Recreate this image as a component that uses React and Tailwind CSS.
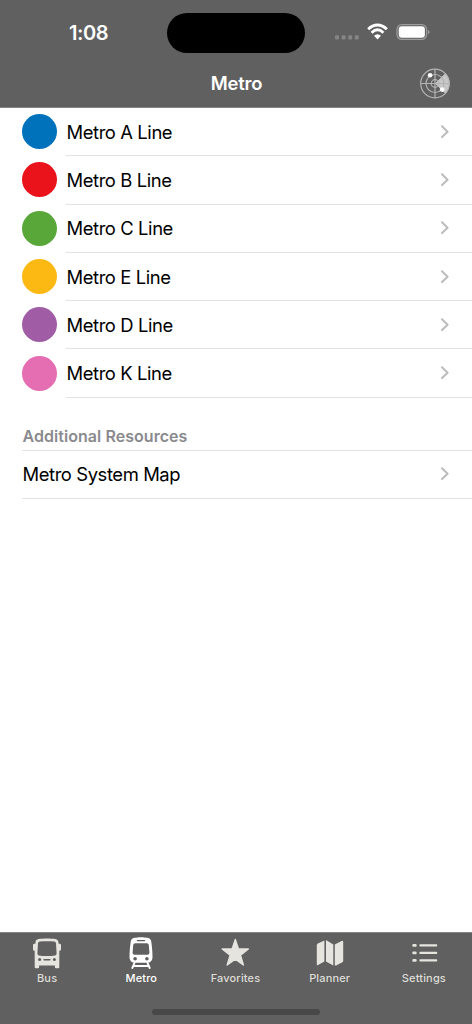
import React from 'react';

const metroLines = [
  { name: 'Metro A Line', color: 'bg-[#0072bc]' },
  { name: 'Metro B Line', color: 'bg-[#eb131b]' },
  { name: 'Metro C Line', color: 'bg-[#58a738]' },
  { name: 'Metro E Line', color: 'bg-[#fdb913]' },
  { name: 'Metro D Line', color: 'bg-[#a05da5]' },
  { name: 'Metro K Line', color: 'bg-[#e56db1]' },
];

const Chevron = () => (
  <svg className="h-4 w-2.5 shrink-0" viewBox="0 0 10 16" fill="none" stroke="#bdbdbf" strokeWidth="2.1" strokeLinecap="round" strokeLinejoin="round">
    <path d="M2 2.3 7.6 7.7 2 13.1" />
  </svg>
);

const RadarIcon = () => (
  <svg className="h-8 w-8" viewBox="0 0 32 32" fill="none">
    <path d="M16 15.5 26.4 5.3A14.6 14.6 0 0 1 26.4 25.7Z" fill="#c8c8c8" />
    <g stroke="#b4b4b4" strokeWidth="1.2">
      <circle cx="16" cy="15.5" r="14.3" />
      <circle cx="16" cy="15.5" r="9" />
      <circle cx="16" cy="15.5" r="3.8" />
      <path d="M16 1.2V29.8M1.7 15.5H30.3" />
    </g>
    <circle cx="11.1" cy="7.3" r="2.3" fill="#fff" />
    <circle cx="23.2" cy="21.6" r="2.3" fill="#fff" />
  </svg>
);

const BusIcon = () => (
  <svg className="h-8 w-8" viewBox="0 0 32 32">
    <path
      fill="#e5e4de"
      fillRule="evenodd"
      d="M7.6 2.1C12 1.4 20 1.4 24.4 2.1Q27.3 2.6 27.5 5.2L27.6 6.8H28.6Q30 6.8 30 8.2V12.4Q30 13.8 28.3 13.8V30.2Q28.3 31.3 27.2 31.3H25Q23.9 31.3 23.9 30.2V28.4H8.1V30.2Q8.1 31.3 7 31.3H4.8Q3.7 31.3 3.7 30.2V13.8Q2 13.8 2 12.4V8.2Q2 6.8 3.4 6.8H4.4L4.5 5.2Q4.7 2.6 7.6 2.1ZM8.8 4.5Q7.1 4.7 7 6.2L6.4 16.6Q6.4 18.1 7.8 18.4C12.5 19.1 19.5 19.1 24.2 18.4Q25.6 18.1 25.6 16.6L25 6.2Q24.9 4.7 23.2 4.5C19 4.1 13 4.1 8.8 4.5Z"
    />
    <g fill="#606060">
      <circle cx="8.6" cy="22.6" r="1.5" />
      <circle cx="23.4" cy="22.6" r="1.5" />
      <rect x="12.4" y="21.9" width="7.2" height="1.5" rx=".7" />
    </g>
  </svg>
);

const TrainIcon = () => (
  <svg className="h-8 w-8" viewBox="0 0 32 32">
    <path
      fill="#fff"
      fillRule="evenodd"
      d="M9.4.8C13-.1 19-.1 22.6.8 25 1.4 26 2.6 26.3 4.8 27 10 27.5 15.3 27.5 20 27.5 23.8 25.2 25.8 21.8 25.8H10.2C6.8 25.8 4.5 23.8 4.5 20 4.5 15.3 5 10 5.7 4.8 6 2.6 7 1.4 9.4.8ZM12.4 2.9Q11.7 2.9 11.7 3.6T12.4 4.3H19.6Q20.3 4.3 20.3 3.6T19.6 2.9ZM10.2 6.2Q8.4 6.2 8.2 8L7.6 15.6Q7.5 17.8 9.5 17.8H22.5Q24.5 17.8 24.4 15.6L23.8 8Q23.6 6.2 21.8 6.2Z"
    />
    <circle cx="10.1" cy="21.7" r="1.8" fill="#606060" />
    <circle cx="21.9" cy="21.7" r="1.8" fill="#606060" />
    <path d="M9.4 26.2 7.3 31M22.6 26.2 24.7 31M9 29H23" fill="none" stroke="#fff" strokeWidth="1.9" strokeLinecap="round" />
  </svg>
);

const StarIcon = () => (
  <svg className="h-8 w-8" viewBox="0 0 32 32" fill="#e5e4de" stroke="#e5e4de" strokeWidth="1.4" strokeLinejoin="round">
    <path d="M16.3 2.5 19.5 12H29.4L21.5 18.1 24.4 28 16.3 22.1 8.2 28 11.1 18.1 3.2 12H13.1Z" />
  </svg>
);

const MapIcon = () => (
  <svg className="h-8 w-8" viewBox="0 0 32 32" fill="#e5e4de">
    <path d="M2.8 8.2Q2.8 7 3.8 6.4L10.4 3.4V24.5L4.1 28Q2.8 28.6 2.8 27.3Z" />
    <path d="M12 3.3 12.8 3.6 19.3 7.6V28.4L12 24.5Z" />
    <path d="M20.8 7.6 27.6 3.9Q29.2 3.3 29.2 4.8V23.7Q29.2 24.7 28.3 25.2L22.2 28.5 20.8 28.4Z" />
  </svg>
);

const ListIcon = () => (
  <svg className="h-8 w-8" viewBox="0 0 32 32" fill="none" stroke="#e5e4de" strokeWidth="2.2" strokeLinecap="round">
    <path d="M5.6 8.4H7.4M5.6 15.9H7.4M5.6 23.4H7.4" strokeWidth="2.7" />
    <path d="M12.4 8.4H28.2M12.4 15.9H28.2M12.4 23.4H28.2" />
  </svg>
);

const tabs = [
  { label: 'Bus', icon: BusIcon },
  { label: 'Metro', icon: TrainIcon, active: true },
  { label: 'Favorites', icon: StarIcon },
  { label: 'Planner', icon: MapIcon },
  { label: 'Settings', icon: ListIcon },
];

const StatusBar = () => (
  <div className="grid h-[60px] grid-cols-[167px_138px_167px] text-white">
    <span className="pt-[18px] pl-[69px] text-[20px] leading-[30px] font-semibold tracking-[-0.4px]">1:08</span>
    <div className="mt-[12.5px] h-[40.5px] rounded-full bg-black" />
    <div className="flex items-start pl-[30px]">
      <svg className="mt-[35px] h-[5px] w-[25px]" viewBox="0 0 25 5" fill="#858585">
        <rect x="0" y=".3" width="4" height="4.2" rx="1.2" />
        <rect x="6.6" y=".3" width="4" height="4.2" rx="1.2" />
        <rect x="13.2" y=".3" width="4" height="4.2" rx="1.2" />
        <rect x="19.8" y=".3" width="4" height="4.2" rx="1.2" />
      </svg>
      <svg className="mt-[23px] ml-[7px] h-[18px] w-[22px]" viewBox="0 0 22 18" fill="none">
        <path d="M1.2 6.2C6.7 .6 14.3 .6 19.8 6.2M4.6 9.7C8.3 6.1 12.7 6.1 16.4 9.7" stroke="#fff" strokeWidth="2.8" />
        <path d="M7 12.8Q10.5 9.8 14 12.8L10.5 16.4Z" fill="#fff" />
      </svg>
      <svg className="mt-[23px] ml-[7px] h-[18px] w-[36px]" viewBox="0 0 36 18" fill="none">
        <rect x="1" y="1.6" width="29.6" height="14.8" rx="4.8" stroke="#9d9d9d" strokeWidth="1.2" />
        <rect x="2.7" y="3.3" width="26.2" height="11.4" rx="3.2" fill="#fff" />
        <path d="M32 6.8Q33.6 7.5 33.6 9T32 11.2Z" fill="#9d9d9d" />
      </svg>
    </div>
  </div>
);

const App = () => {
  return (
    <div className="flex h-screen w-[472px] flex-col overflow-hidden bg-white font-['Inter','Liberation_Sans',sans-serif]">
      <header className="h-[108px] shrink-0 border-b border-[#858585] bg-[#606060]">
        <StatusBar />
        <div className="grid h-[47px] grid-cols-[1fr_auto_1fr] items-center pr-[21px] text-white">
          <h1 className="col-start-2 pl-[22px] text-[18.4px] font-semibold tracking-[-0.2px]">Metro</h1>
          <button className="justify-self-end" aria-label="Radar">
            <RadarIcon />
          </button>
        </div>
      </header>

      <main className="flex-1 text-black">
        <ul>
          {metroLines.map((line) => (
            <li key={line.name} className="flex h-[48.3px] items-center pl-[22px]">
              <span className={`mb-px size-[35px] shrink-0 rounded-full ${line.color}`} />
              <div className="ml-[9px] flex h-full flex-1 items-center justify-between border-b border-[#e2e2e3] pr-[22px]">
                <span className="pt-[2px] pl-[0.5px] text-[18.4px] tracking-[-0.4px]">{line.name}</span>
                <Chevron />
              </div>
            </li>
          ))}
        </ul>
        <div className="ml-[22px]">
          <h2 className="flex h-[53px] items-end border-b border-[#e2e2e3] pb-0.5 pl-[0.5px] text-[16px] font-semibold tracking-[0.05px] text-[#8a8a8e]">
            Additional Resources
          </h2>
          <div className="flex h-12 items-center justify-between border-b border-[#e2e2e3] pr-[22px]">
            <span className="pt-[2px] pl-[0.5px] text-[18.4px] tracking-[-0.4px]">Metro System Map</span>
            <Chevron />
          </div>
        </div>
      </main>

      <footer className="h-[92px] shrink-0 border-t border-[#858585] bg-[#606060]">
        <nav className="grid h-[76px] grid-cols-5 items-start pt-1 pr-px">
          {tabs.map(({ label, icon: Icon, active }) => (
            <button key={label} className={`flex flex-col items-center ${active ? 'text-white' : 'text-[#dddcd7]'}`}>
              <Icon />
              <span className="mt-0.5 text-[11px] leading-[14px] font-medium tracking-[0.15px]">{label}</span>
            </button>
          ))}
        </nav>
        <div className="mx-auto h-[6px] w-[168px] rounded-full bg-[#484848]" />
      </footer>
    </div>
  );
};

export default App;
